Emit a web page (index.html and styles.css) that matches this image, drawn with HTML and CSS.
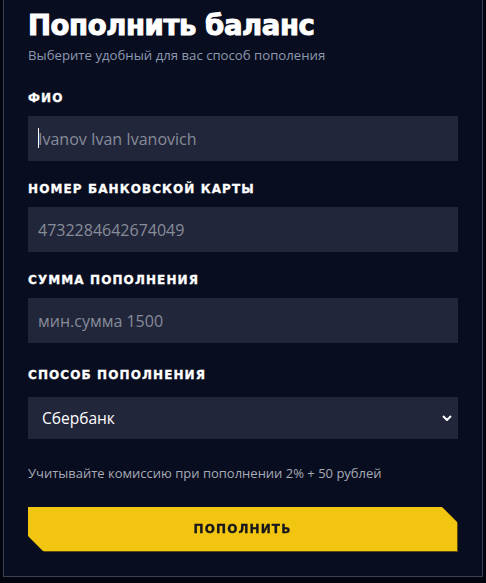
FILE: index.html
```html
<!DOCTYPE html>
<html lang="ru">
<head>
<meta charset="utf-8">
<title>Пополнить баланс</title>
<link rel="stylesheet" href="styles.css">
</head>
<body>
<div class="panel">
  <h1 class="title">Пополнить баланс</h1>
  <p class="subtitle">Выберите удобный для вас способ пополения</p>

  <div class="field">
    <label class="label">ФИО</label>
    <div class="input-wrap focused">
      <input class="input" type="text" placeholder="Ivanov Ivan Ivanovich">
    </div>
  </div>

  <div class="field">
    <label class="label">Номер банковской карты</label>
    <div class="input-wrap">
      <input class="input" type="text" placeholder="4732284642674049">
    </div>
  </div>

  <div class="field">
    <label class="label">Сумма пополнения</label>
    <div class="input-wrap">
      <input class="input" type="text" placeholder="мин.сумма 1500">
    </div>
  </div>

  <div class="field field-select">
    <label class="label">Способ пополнения</label>
    <div class="select-wrap">
      <select class="select">
        <option>Сбербанк</option>
      </select>
      <svg class="chevron" width="10" height="6" viewBox="0 0 10 6"><path d="M1 1l4 4 4-4" fill="none" stroke="#fff" stroke-width="2"/></svg>
    </div>
  </div>

  <p class="note">Учитывайте комиссию при пополнении 2% + 50 рублей</p>

  <div class="btn-shadow">
    <button class="btn" type="button">Пополнить</button>
  </div>
</div>
</body>
</html>
```
FILE: styles.css
```css
* { box-sizing: border-box; }
html, body { margin: 0; padding: 0; }
body {
  background: #03050e;
  width: 486px;
  height: 583px;
  overflow: hidden;
}
.panel {
  margin-left: 3px;
  width: 480px;
  height: 577px;
  background: #090d20;
  border: 1px solid #3d4052;
  border-top: 0;
  padding: 8px 24px 0;
}
.title {
  margin: 0;
  font-family: "DejaVu Sans", sans-serif;
  font-weight: 700;
  font-size: 27.5px;
  line-height: 34px;
  color: #ffffff;
  letter-spacing: -0.4px;
  -webkit-text-stroke: 1px #ffffff;
}
.subtitle {
  margin: 4px 0 0;
  font-family: "Open Sans", sans-serif;
  font-size: 13.2px;
  line-height: 18px;
  color: #8d99ae;
}
.field { margin-top: 27px; }
.field + .field { margin-top: 21px; }
.field.field-select { margin-top: 25px; }
.label {
  display: block;
  font-family: "DejaVu Sans", sans-serif;
  font-weight: 700;
  font-size: 12px;
  line-height: 14px;
  letter-spacing: 1.1px;
  text-transform: uppercase;
  color: #ffffff;
  -webkit-text-stroke: 0.3px #ffffff;
  margin-bottom: 11px;
}
.field-select .label { margin-bottom: 15px; }
.input-wrap { position: relative; }
.input {
  display: block;
  width: 100%;
  height: 45px;
  border: 0;
  outline: none;
  background: #22263a;
  padding: 0 10px;
  font-family: "Open Sans", sans-serif;
  font-size: 16px;
  color: #ffffff;
}
.input::placeholder { color: #878c99; }
.input-wrap.focused::before {
  content: "";
  position: absolute;
  left: 10px;
  top: 12px;
  width: 1px;
  height: 20px;
  background: #ffffff;
}
.select-wrap { position: relative; }
.select {
  display: block;
  width: 100%;
  height: 42px;
  border: 0;
  outline: none;
  appearance: none;
  -webkit-appearance: none;
  background: #22263a;
  padding: 0 14px;
  font-family: "Open Sans", sans-serif;
  font-size: 15.5px;
  color: #ffffff;
  border-radius: 0;
}
.chevron {
  position: absolute;
  right: 6px;
  top: 18px;
  pointer-events: none;
}
.note {
  margin: 25px 0 0;
  font-family: "Open Sans", sans-serif;
  font-size: 13px;
  line-height: 18px;
  color: #a7abb6;
}
.btn-shadow {
  margin-top: 25px;
  filter: drop-shadow(1px 1px 0 #5e4c0a);
  width: 429px;
}
.btn {
  display: block;
  width: 429px;
  height: 44px;
  border: 0;
  background: #f2c511;
  clip-path: polygon(0 0, calc(100% - 15px) 0, 100% 15px, 100% 100%, 15px 100%, 0 calc(100% - 15px));
  font-family: "DejaVu Sans", sans-serif;
  font-weight: 700;
  font-size: 12px;
  letter-spacing: 1.1px;
  text-transform: uppercase;
  color: #15171d;
  -webkit-text-stroke: 0.3px #15171d;
  padding: 0;
  cursor: pointer;
}
```
